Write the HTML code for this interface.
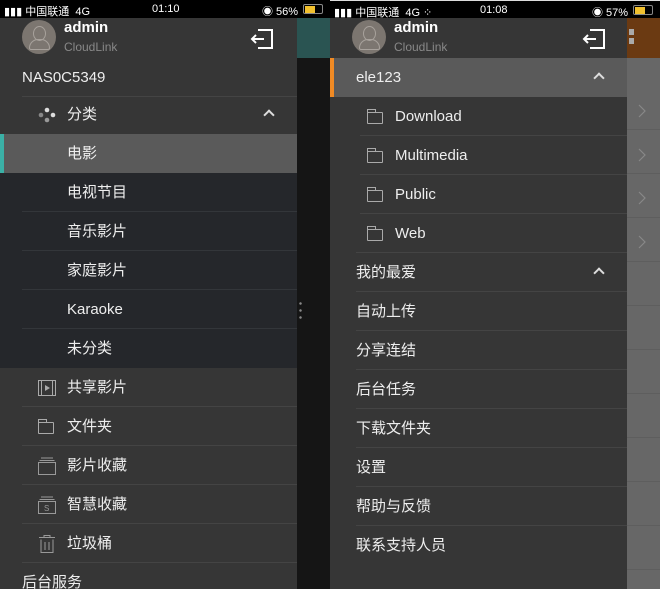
<!DOCTYPE html>
<html><head><meta charset="utf-8"><style>
*{margin:0;padding:0;box-sizing:border-box}
body{width:660px;height:589px;overflow:hidden;background:#111;font-family:"Liberation Sans","Noto Sans CJK SC",sans-serif;color:#eee;position:relative}
.abs{position:absolute}
.sb{position:absolute;top:0;height:18px;background:#000;color:#fff;font-size:11px}
.sb span{position:absolute;top:3px}
.panel{position:absolute;top:18px;width:297px;height:571px;background:#363636;overflow:hidden}
.hdr{position:absolute;top:0;left:0;width:297px;height:40px}
.av{position:absolute;left:22px;top:2px;width:34px;height:34px;border-radius:50%;background:#7c7670}
.av:before{content:"";position:absolute;left:11px;top:6px;width:11px;height:13px;border:1.5px solid #a8a29c;border-radius:50%}
.av:after{content:"";position:absolute;left:7px;top:19px;width:19px;height:9px;border:1.5px solid #a8a29c;border-radius:9px 9px 2px 2px}
.nm{position:absolute;left:64px;top:1px;font-size:15px;color:#fff}
.cl{position:absolute;left:64px;top:22px;font-size:12px;color:#888}
.row{position:absolute;left:0;width:297px;height:39px;font-size:15px;line-height:40px}
.row .t{position:absolute}
.ln{position:absolute;bottom:0;left:22px;right:0;height:1px;background:#444}
.chev{position:absolute;right:24px;top:16px;width:8px;height:8px;border-left:2px solid #ddd;border-top:2px solid #ddd;transform:rotate(45deg)}
.fold{position:absolute;width:16px;height:12px;border:1px solid #aaa;border-radius:1px}
.fold:before{content:"";position:absolute;left:-1px;top:-4px;width:7px;height:3px;border:1px solid #aaa;border-bottom:none}
.rc{position:absolute;left:638px}
</style></head><body>
<div class="sb" style="left:0;width:330px"><span style="left:4px">▮▮▮ 中国联通 &nbsp;4G</span><span style="left:152px">01:10</span><span style="left:262px">◉ 56%</span><span style="left:303px;top:4px;width:20px;height:10px;border:1px solid #888;border-radius:2px"><i style="display:block;width:10px;height:7px;margin:1px;background:#f2c12e"></i></span></div>
<div class="sb" style="left:330px;width:330px;border-top:1px solid #ddd"><span style="left:4px">▮▮▮ 中国联通 &nbsp;4G ⁘</span><span style="left:150px">01:08</span><span style="left:262px">◉ 57%</span><span style="left:303px;top:4px;width:20px;height:10px;border:1px solid #888;border-radius:2px"><i style="display:block;width:10px;height:7px;margin:1px;background:#f2c12e"></i></span></div>

<div class="abs" style="left:297px;top:18px;width:33px;height:40px;background:#2a5452"></div>
<div class="abs" style="left:297px;top:58px;width:33px;height:531px;background:#151515"></div>
<div class="abs" style="left:299px;top:300px;width:3px;height:20px;background:radial-gradient(circle,#888 1px,transparent 1.5px) 0 0/3px 7px"></div>

<div class="panel" style="left:0">
<div class="hdr"><div class="av"></div><div class="nm" style="font-weight:bold">admin</div><div class="cl">CloudLink</div>
<svg class="abs" style="left:250px;top:10px" width="24" height="22" viewBox="0 0 24 22"><path d="M8 2H22V20H8M14 11H2M6 7L2 11L6 15" fill="none" stroke="#fff" stroke-width="2"/></svg></div>
<div class="row" style="top:40px"><span class="t" style="left:22px">NAS0C5349</span><div class="ln"></div></div>
<div class="row" style="top:77px"><svg class="abs" style="left:38px;top:12px" width="18" height="16"><circle cx="9" cy="3" r="2.3" fill="#ddd"/><circle cx="3" cy="8" r="2.3" fill="#888"/><circle cx="15" cy="8" r="2.3" fill="#ddd"/><circle cx="9" cy="13" r="2.3" fill="#999"/></svg><span class="t" style="left:67px">分类</span><div class="chev"></div></div>
<div class="abs" style="left:0;top:155px;width:297px;height:195px;background:#25272b"></div>
<div class="row" style="top:116px;background:#5a5a5a"><div class="abs" style="left:0;top:0;width:4px;height:39px;background:#3bb0a6"></div><span class="t" style="left:67px">电影</span></div>
<div class="row" style="top:155px"><span class="t" style="left:67px">电视节目</span><div class="ln" style="background:#33363a"></div></div>
<div class="row" style="top:194px"><span class="t" style="left:67px">音乐影片</span><div class="ln" style="background:#33363a"></div></div>
<div class="row" style="top:233px"><span class="t" style="left:67px">家庭影片</span><div class="ln" style="background:#33363a"></div></div>
<div class="row" style="top:272px"><span class="t" style="left:67px">Karaoke</span><div class="ln" style="background:#33363a"></div></div>
<div class="row" style="top:311px"><span class="t" style="left:67px">未分类</span></div>
<div class="row" style="top:350px"><svg class="abs" style="left:38px;top:12px" width="18" height="16"><rect x="0.5" y="0.5" width="17" height="15" fill="none" stroke="#aaa"/><path d="M3.5 1V15M14.5 1V15" stroke="#aaa"/><path d="M7 5L12 8L7 11Z" fill="#aaa"/></svg><span class="t" style="left:67px">共享影片</span><div class="ln"></div></div>
<div class="row" style="top:389px"><div class="fold" style="left:38px;top:15px"></div><span class="t" style="left:67px">文件夹</span><div class="ln"></div></div>
<div class="row" style="top:428px"><svg class="abs" style="left:38px;top:11px" width="18" height="18"><path d="M3 1H15M1.5 3.5H16.5" stroke="#999"/><rect x="0.5" y="5.5" width="17" height="12" fill="none" stroke="#999"/></svg><span class="t" style="left:67px">影片收藏</span><div class="ln"></div></div>
<div class="row" style="top:467px"><svg class="abs" style="left:38px;top:11px" width="18" height="18"><path d="M3 1H15M1.5 3.5H16.5" stroke="#999"/><rect x="0.5" y="5.5" width="17" height="12" fill="none" stroke="#999"/><text x="6" y="15" font-size="8" fill="#999" font-family="Liberation Sans">S</text></svg><span class="t" style="left:67px">智慧收藏</span><div class="ln"></div></div>
<div class="row" style="top:506px"><svg class="abs" style="left:39px;top:11px" width="16" height="18"><path d="M0 2.5H16M5 2.5V0.5H11V2.5M2 4.5V17.5H14V4.5M6 7V15M10 7V15" fill="none" stroke="#999"/></svg><span class="t" style="left:67px">垃圾桶</span><div class="ln"></div></div>
<div class="row" style="top:545px"><span class="t" style="left:22px">后台服务</span></div>
</div>

<div class="abs" style="left:627px;top:18px;width:33px;height:40px;background:#6b3a12"></div>
<div class="abs" style="left:629px;top:29px;width:5px;height:16px;background:repeating-linear-gradient(#aaa 0 6px,transparent 6px 9px)"></div>
<div class="abs" style="left:627px;top:58px;width:33px;height:531px;background:#676767"></div>
<div class="abs" style="left:627px;top:86px;width:33px;height:503px;background:repeating-linear-gradient(transparent 0 43px,#5e5e5e 43px 44px)"></div>
<svg class="rc" style="top:104px" width="8" height="14"><path d="M1 1L7 7L1 13" fill="none" stroke="#888" stroke-width="1.2"/></svg>
<svg class="rc" style="top:148px" width="8" height="14"><path d="M1 1L7 7L1 13" fill="none" stroke="#888" stroke-width="1.2"/></svg>
<svg class="rc" style="top:191px" width="8" height="14"><path d="M1 1L7 7L1 13" fill="none" stroke="#888" stroke-width="1.2"/></svg>
<svg class="rc" style="top:235px" width="8" height="14"><path d="M1 1L7 7L1 13" fill="none" stroke="#888" stroke-width="1.2"/></svg>

<div class="panel" style="left:330px">
<div class="hdr"><div class="av"></div><div class="nm" style="font-weight:bold">admin</div><div class="cl">CloudLink</div>
<svg class="abs" style="left:252px;top:10px" width="24" height="22" viewBox="0 0 24 22"><path d="M8 2H22V20H8M14 11H2M6 7L2 11L6 15" fill="none" stroke="#fff" stroke-width="2"/></svg></div>
<div class="row" style="top:40px;background:#5a5a5a"><div class="abs" style="left:0;top:0;width:4px;height:39px;background:#f08a24"></div><span class="t" style="left:26px">ele123</span><div class="chev"></div></div>
<div class="row" style="top:79px"><div class="fold" style="left:37px;top:15px"></div><span class="t" style="left:65px">Download</span><div class="ln" style="left:30px"></div></div>
<div class="row" style="top:118px"><div class="fold" style="left:37px;top:15px"></div><span class="t" style="left:65px">Multimedia</span><div class="ln" style="left:30px"></div></div>
<div class="row" style="top:157px"><div class="fold" style="left:37px;top:15px"></div><span class="t" style="left:65px">Public</span><div class="ln" style="left:30px"></div></div>
<div class="row" style="top:196px"><div class="fold" style="left:37px;top:15px"></div><span class="t" style="left:65px">Web</span><div class="ln" style="left:26px"></div></div>
<div class="row" style="top:235px"><span class="t" style="left:26px">我的最爱</span><div class="chev"></div><div class="ln" style="left:26px"></div></div>
<div class="row" style="top:274px"><span class="t" style="left:26px">自动上传</span><div class="ln" style="left:26px"></div></div>
<div class="row" style="top:313px"><span class="t" style="left:26px">分享连结</span><div class="ln" style="left:26px"></div></div>
<div class="row" style="top:352px"><span class="t" style="left:26px">后台任务</span><div class="ln" style="left:26px"></div></div>
<div class="row" style="top:391px"><span class="t" style="left:26px">下载文件夹</span><div class="ln" style="left:26px"></div></div>
<div class="row" style="top:430px"><span class="t" style="left:26px">设置</span><div class="ln" style="left:26px"></div></div>
<div class="row" style="top:469px"><span class="t" style="left:26px">帮助与反馈</span><div class="ln" style="left:26px"></div></div>
<div class="row" style="top:508px"><span class="t" style="left:26px">联系支持人员</span></div>
</div>
</body></html>
